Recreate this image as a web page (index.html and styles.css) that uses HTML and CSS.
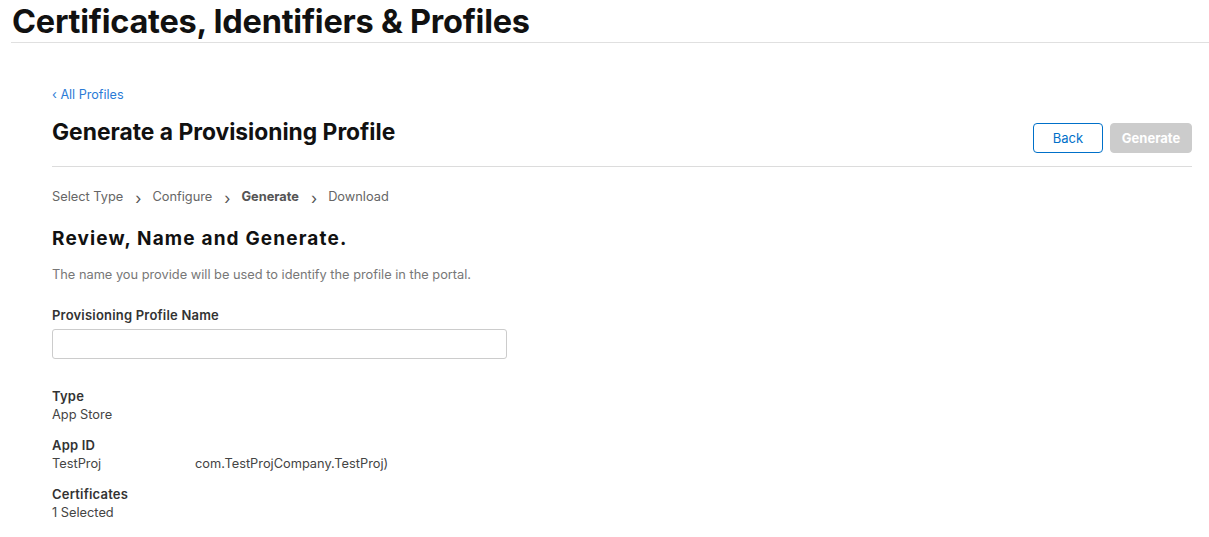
FILE: index.html
```html
<!DOCTYPE html>
<html>
<head>
<meta charset="utf-8">
<link rel="stylesheet" href="styles.css">
</head>
<body>
<header class="top">
  <h1 class="top-title">Certificates, Identifiers &amp; Profiles</h1>
</header>
<main class="content">
  <a class="back-link" href="#">‹ All Profiles</a>
  <div class="page-head">
    <h2 class="page-title">Generate a Provisioning Profile</h2>
    <div class="actions">
      <button class="btn btn-back">Back</button>
      <button class="btn btn-gen">Generate</button>
    </div>
  </div>
  <nav class="steps">
    <span class="step">Select Type</span>
    <span class="chev">›</span>
    <span class="step">Configure</span>
    <span class="chev">›</span>
    <span class="step current">Generate</span>
    <span class="chev">›</span>
    <span class="step">Download</span>
  </nav>
  <h3 class="section-title">Review, Name and Generate.</h3>
  <p class="desc">The name you provide will be used to identify the profile in the portal.</p>
  <label class="field-label">Provisioning Profile Name</label>
  <input class="field-input" type="text">
  <dl class="details">
    <div class="item">
      <dt>Type</dt>
      <dd>App Store</dd>
    </div>
    <div class="item">
      <dt>App ID</dt>
      <dd class="appid"><span class="app-name">TestProj</span><span>com.TestProjCompany.TestProj)</span></dd>
    </div>
    <div class="item">
      <dt>Certificates</dt>
      <dd>1 Selected</dd>
    </div>
  </dl>
</main>
</body>
</html>
```
FILE: styles.css
```css
* { box-sizing: border-box; }
body {
  margin: 0;
  font-family: Inter, "Noto Sans", sans-serif;
  color: #333;
  background: #fff;
}
.top {
  margin-left: 11px;
  border-bottom: 1px solid #e0e0e0;
  height: 43px;
}
.top-title {
  margin: 0;
  padding: 1px 0 0 1px;
  font-size: 32.5px;
  font-weight: 700;
  line-height: 41px;
  letter-spacing: -0.25px;
  color: #111;
}
.content {
  margin: 0 17px 0 52px;
  display: flex;
  flex-direction: column;
  align-items: flex-start;
}
.back-link {
  margin-top: 44px;
  font-size: 12.6px;
  line-height: 16px;
  color: #2b7bd6;
  text-decoration: none;
}
.page-head {
  align-self: stretch;
  display: flex;
  justify-content: space-between;
  align-items: flex-end;
  border-bottom: 1px solid #dcdcdc;
  padding-bottom: 13px;
  margin-top: 15px;
}
.page-title {
  margin: 0 0 7px;
  font-size: 22.8px;
  font-weight: 700;
  line-height: 28px;
  color: #111;
}
.actions {
  display: flex;
  gap: 7px;
}
.btn {
  font-family: inherit;
  height: 30px;
  border-radius: 4px;
  font-size: 13px;
  padding: 0;
}
.btn-back {
  width: 70px;
  background: #fff;
  border: 1px solid #0070c9;
  color: #0070c9;
}
.btn-gen {
  width: 82px;
  background: #ccc;
  border: 1px solid #ccc;
  color: #fff;
  font-weight: 700;
}
.steps {
  display: flex;
  align-items: center;
  margin-top: 19px;
  font-size: 12.8px;
  line-height: 18px;
  color: #666;
}
.chev {
  font-size: 16px;
  margin: 3px 11px 0 12px;
  color: #555;
}
.step.current {
  font-weight: 700;
  color: #555;
}
.section-title {
  margin: 20px 0 0;
  font-size: 19px;
  font-weight: 700;
  letter-spacing: 1.15px;
  line-height: 24px;
  color: #111;
}
.desc {
  margin: 16px 0 0;
  font-size: 12.8px;
  line-height: 16px;
  color: #777;
}
.field-label {
  margin-top: 24px;
  font-size: 13px;
  font-weight: 600;
  letter-spacing: 0.2px;
  line-height: 16px;
  color: #333;
}
.field-input {
  margin-top: 6px;
  width: 455px;
  height: 30px;
  border: 1px solid #ccc;
  border-radius: 3px;
}
.details {
  margin: 28px 0 0;
  display: flex;
  flex-direction: column;
  gap: 12px;
}
.item dt {
  font-size: 13px;
  font-weight: 600;
  letter-spacing: 0.2px;
  line-height: 18px;
  color: #333;
}
.item dd {
  margin: 1px 0 0;
  font-size: 12.8px;
  line-height: 18px;
  color: #444;
}
.appid {
  display: flex;
}
.app-name {
  width: 143px;
}
```
